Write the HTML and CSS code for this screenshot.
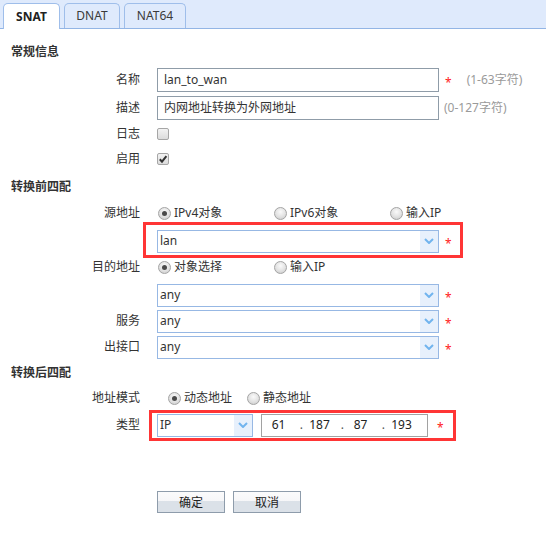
FILE: index.html
```html
<!DOCTYPE html>
<html lang="zh">
<head>
<meta charset="utf-8">
<title>SNAT</title>
<link rel="stylesheet" href="styles.css">
</head>
<body>
<div class="tabs">
  <div class="tab active t-snat">SNAT</div>
  <div class="tab t-dnat">DNAT</div>
  <div class="tab t-nat64">NAT64</div>
</div>

<div class="form">
  <div class="section s1">常规信息</div>

  <div class="row r-name">
    <div class="lbl">名称</div>
    <div class="ctl">
      <div class="field">lan_to_wan</div>
      <span class="star">*</span>
      <span class="hint hint-name">(1-63字符)</span>
    </div>
  </div>

  <div class="row r-desc">
    <div class="lbl">描述</div>
    <div class="ctl">
      <div class="field">内网地址转换为外网地址</div>
      <span class="hint hint-desc">(0-127字符)</span>
    </div>
  </div>

  <div class="row r-log">
    <div class="lbl">日志</div>
    <div class="ctl"><span class="check"></span></div>
  </div>

  <div class="row r-enable">
    <div class="lbl">启用</div>
    <div class="ctl">
      <span class="check">
        <svg width="10" height="10" viewBox="0 0 10 10"><path d="M1.8 5.2 L4 7.6 L8.4 2.2" fill="none" stroke="#333" stroke-width="2"/></svg>
      </span>
    </div>
  </div>

  <div class="section s2">转换前四配</div>

  <div class="row r-src">
    <div class="lbl">源地址</div>
    <div class="ctl radios">
      <label class="opt"><span class="radio on"></span>IPv4对象</label>
      <label class="opt"><span class="radio"></span>IPv6对象</label>
      <label class="opt"><span class="radio"></span>输入IP</label>
    </div>
  </div>

  <div class="row r-srcsel">
    <div class="lbl"></div>
    <div class="ctl">
      <div class="mark mark1">
        <div class="select wide"><span class="val">lan</span><span class="arrow"><svg width="10" height="6" viewBox="0 0 10 6"><path d="M1 1 L5 5 L9 1" fill="none" stroke="#71b4ee" stroke-width="2"/></svg></span></div>
        <span class="star">*</span>
      </div>
    </div>
  </div>

  <div class="row r-dst">
    <div class="lbl">目的地址</div>
    <div class="ctl radios">
      <label class="opt"><span class="radio on"></span>对象选择</label>
      <label class="opt"><span class="radio"></span>输入IP</label>
    </div>
  </div>

  <div class="row r-sel r-first">
    <div class="lbl"></div>
    <div class="ctl">
      <div class="select wide"><span class="val">any</span><span class="arrow"><svg width="10" height="6" viewBox="0 0 10 6"><path d="M1 1 L5 5 L9 1" fill="none" stroke="#71b4ee" stroke-width="2"/></svg></span></div>
      <span class="star">*</span>
    </div>
  </div>

  <div class="row r-sel">
    <div class="lbl">服务</div>
    <div class="ctl">
      <div class="select wide"><span class="val">any</span><span class="arrow"><svg width="10" height="6" viewBox="0 0 10 6"><path d="M1 1 L5 5 L9 1" fill="none" stroke="#71b4ee" stroke-width="2"/></svg></span></div>
      <span class="star">*</span>
    </div>
  </div>

  <div class="row r-sel">
    <div class="lbl">出接口</div>
    <div class="ctl">
      <div class="select wide"><span class="val">any</span><span class="arrow"><svg width="10" height="6" viewBox="0 0 10 6"><path d="M1 1 L5 5 L9 1" fill="none" stroke="#71b4ee" stroke-width="2"/></svg></span></div>
      <span class="star">*</span>
    </div>
  </div>

  <div class="section s3">转换后四配</div>

  <div class="row r-mode">
    <div class="lbl">地址模式</div>
    <div class="ctl radios mode">
      <label class="opt"><span class="radio on"></span>动态地址</label>
      <label class="opt"><span class="radio"></span>静态地址</label>
    </div>
  </div>

  <div class="row r-type">
    <div class="lbl">类型</div>
    <div class="ctl">
      <div class="mark mark2">
        <div class="select narrow"><span class="val">IP</span><span class="arrow"><svg width="10" height="6" viewBox="0 0 10 6"><path d="M1 1 L5 5 L9 1" fill="none" stroke="#71b4ee" stroke-width="2"/></svg></span></div>
        <div class="ipbox">
          <span class="seg">61</span><span class="dot">.</span>
          <span class="seg">187</span><span class="dot">.</span>
          <span class="seg">87</span><span class="dot">.</span>
          <span class="seg">193</span>
        </div>
        <span class="star star-ip">*</span>
      </div>
    </div>
  </div>

  <div class="buttons">
    <button class="btn">确定</button>
    <button class="btn">取消</button>
  </div>
</div>
</body>
</html>
```
FILE: styles.css
```css
html, body {
  margin: 0;
  padding: 0;
  background: #fff;
}
body {
  font-family: "Noto Sans", "Noto Sans CJK SC", sans-serif;
  font-size: 12px;
  line-height: 16px;
  color: #333;
}

/* tabs */
.tabs {
  height: 28px;
  background: #dfeafc;
  border-bottom: 1px solid #93b5e5;
  display: flex;
  align-items: flex-end;
  padding-left: 3px;
  gap: 4px;
}
.tab {
  box-sizing: border-box;
  height: 25px;
  border: 1px solid #9fbeea;
  border-bottom: none;
  border-radius: 5px 5px 0 0;
  background: #dfeafc;
  display: flex;
  align-items: center;
  justify-content: center;
  color: #3a3a3a;
}
.tab.active {
  height: 26px;
  margin-bottom: -1px;
  background: #fff;
  font-weight: bold;
  color: #222;
}
.t-snat { width: 57px; }
.t-dnat { width: 56px; }
.t-nat64 { width: 62px; }

/* form */
.form {
  margin-top: 11px;
}
.section {
  display: flex;
  align-items: center;
  padding-left: 11px;
  font-weight: bold;
  color: #333;
}
.s1 { height: 24px; }
.s2 { height: 34px; }
.s3 { height: 26px; }

.row {
  display: flex;
  align-items: center;
}
.lbl {
  width: 140px;
  flex: none;
  text-align: right;
}
.ctl {
  margin-left: 17px;
  display: flex;
  align-items: center;
}

.r-name { height: 32px; }
.r-desc { height: 24px; }
.r-log { height: 28px; }
.r-enable { height: 22px; }
.r-src { height: 18px; }
.r-srcsel { height: 36px; }
.r-dst { height: 18px; }
.r-sel { height: 26px; }
.r-first { margin-top: 6px; }
.r-mode { height: 24px; }
.r-type { height: 30px; }

.field {
  box-sizing: border-box;
  width: 282px;
  height: 24px;
  border: 1px solid #8f9ca8;
  padding-left: 6px;
  display: flex;
  align-items: center;
  color: #333;
}

.star {
  color: #ff2020;
  margin-left: 6px;
  padding-top: 5px;
  font-size: 12px;
}
.hint {
  color: #9a9a9a;
}
.hint-name { margin-left: 15px; }
.hint-desc { margin-left: 5px; }

.check {
  box-sizing: border-box;
  width: 12px;
  height: 12px;
  border: 1px solid #a6a6a6;
  border-radius: 2px;
  background: linear-gradient(#f3f3f3, #dcdcdc);
  display: flex;
  align-items: center;
  justify-content: center;
}
.check svg { display: block; }

/* radios */
.radios { display: flex; }
.opt {
  width: 116px;
  display: flex;
  align-items: center;
  gap: 3px;
  padding-left: 1px;
  box-sizing: border-box;
}
.mode .opt {
  width: 79px;
  padding-left: 11px;
}
.radio {
  box-sizing: border-box;
  width: 13px;
  height: 13px;
  border-radius: 50%;
  border: 1px solid #a4a4a4;
  background: radial-gradient(circle at 50% 35%, #fafafa 0%, #e2e2e2 55%, #c6c6c6 100%);
  display: flex;
  align-items: center;
  justify-content: center;
  flex: none;
}
.radio.on::after {
  content: "";
  width: 5px;
  height: 5px;
  border-radius: 50%;
  background: #4a4a4a;
}

/* selects */
.select {
  box-sizing: border-box;
  height: 23px;
  border: 1px solid #97b8e4;
  display: flex;
  align-items: stretch;
  background: #fff;
}
.select.wide { width: 282px; }
.select.narrow { width: 96px; }
.select .val {
  flex: 1;
  padding-left: 2px;
  display: flex;
  align-items: center;
  color: #333;
}
.select .arrow {
  width: 18px;
  background: #e7f0fc;
  display: flex;
  align-items: center;
  justify-content: center;
}
.select .arrow svg { display: block; }

/* red annotation boxes */
.mark {
  box-sizing: border-box;
  border: 3px solid #ff3535;
  display: flex;
  align-items: center;
}
.mark1 {
  width: 320px;
  height: 36px;
  margin-left: -14px;
  padding: 5px 0 3px 11px;
}
.mark2 {
  width: 307px;
  height: 31px;
  margin-left: -8px;
  padding: 1px 0 1px 5px;
}

.ipbox {
  box-sizing: border-box;
  width: 167px;
  height: 23px;
  margin-left: 8px;
  border: 1px solid #a2a2a2;
  display: flex;
  align-items: center;
  color: #222;
}
.seg {
  width: 33px;
  text-align: center;
  flex: none;
}
.dot {
  width: 8px;
  text-align: right;
  flex: none;
  color: #555;
}
.star-ip { margin-left: 9px; }

/* buttons */
.buttons {
  margin-top: 51px;
  padding-left: 157px;
  display: flex;
  gap: 8px;
}
.btn {
  box-sizing: border-box;
  width: 68px;
  height: 22px;
  margin: 0;
  padding: 0;
  border: 1px solid #8e9cab;
  background: linear-gradient(#fbfbfc 0%, #f6f6f8 45%, #dbe1e8 46%, #dbe1e8 100%);
  font-family: "Noto Sans", "Noto Sans CJK SC", sans-serif;
  font-size: 12px;
  color: #222;
}
```
